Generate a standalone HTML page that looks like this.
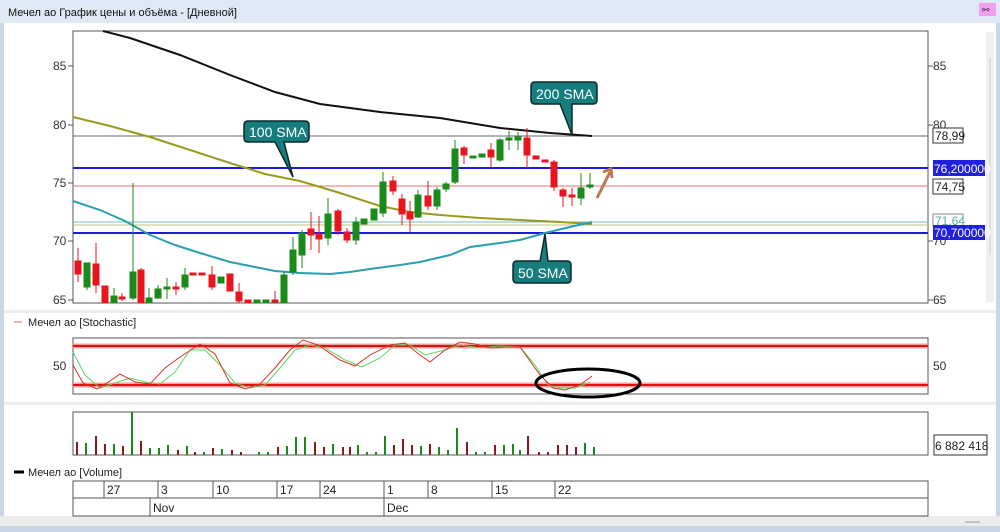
<!DOCTYPE html>
<html><head><meta charset="utf-8"><style>
html,body{margin:0;padding:0;width:1000px;height:532px;overflow:hidden;background:#fff;font-family:"Liberation Sans",sans-serif}
svg{display:block}
text{font-family:"Liberation Sans",sans-serif}
</style></head><body>
<svg width="1000" height="532" viewBox="0 0 1000 532" xmlns="http://www.w3.org/2000/svg">
<rect x="0" y="0" width="1000" height="532" fill="#fff"/>
<rect x="0" y="0" width="1000" height="23" fill="#dfe9f5"/>
<text x="8" y="16" font-size="11" fill="#111">Мечел ао График цены и объёма - [Дневной]</text>
<rect x="979" y="3" width="17" height="13" fill="#f0a0f0"/>
<text x="982" y="13" font-size="9" fill="#333">⚯</text>
<rect x="0" y="23" width="4" height="509" fill="#c9d6e6"/>
<rect x="996" y="23" width="4" height="509" fill="#c9d6e6"/>
<rect x="986" y="32" width="8" height="270" fill="#f0f0f0"/>
<line x1="990" y1="58" x2="990" y2="255" stroke="#ccc"/>
<rect x="0" y="516" width="1000" height="10" fill="#ececec"/>
<rect x="0" y="526" width="1000" height="6" fill="#c9d6e6"/>
<line x1="965" y1="522" x2="980" y2="522" stroke="#999"/>
<rect x="4" y="310" width="992" height="3" fill="#eee"/>
<rect x="4" y="402" width="992" height="3" fill="#eee"/>

<!-- main chart -->
<rect x="73" y="31" width="855" height="272" fill="#fff" stroke="#555" stroke-width="1"/>
<g font-size="12" fill="#333">
<text x="53" y="70">85</text><text x="53" y="129">80</text><text x="53" y="187">75</text><text x="53" y="245">70</text><text x="53" y="304">65</text>
<text x="933" y="70">85</text><text x="933" y="129">80</text><text x="933" y="245">70</text><text x="933" y="304">65</text>
</g>
<g stroke="#555">
<line x1="68" y1="66" x2="73" y2="66"/><line x1="68" y1="125" x2="73" y2="125"/><line x1="68" y1="183" x2="73" y2="183"/><line x1="68" y1="241" x2="73" y2="241"/><line x1="68" y1="300" x2="73" y2="300"/>
<line x1="928" y1="66" x2="933" y2="66"/><line x1="928" y1="125" x2="933" y2="125"/><line x1="928" y1="241" x2="933" y2="241"/><line x1="928" y1="300" x2="933" y2="300"/>
</g>
<line x1="73" y1="136" x2="928" y2="136" stroke="#666" stroke-width="1"/>
<line x1="73" y1="168" x2="928" y2="168" stroke="#1a1ae0" stroke-width="2"/>
<line x1="73" y1="186" x2="928" y2="186" stroke="#e07070" stroke-width="1"/>
<line x1="73" y1="222" x2="928" y2="222" stroke="#70c0c0" stroke-width="1"/>
<line x1="73" y1="225" x2="928" y2="225" stroke="#c0c080" stroke-width="1"/>
<line x1="73" y1="233" x2="928" y2="233" stroke="#1a1ae0" stroke-width="2"/>

<!-- right labels -->
<rect x="933" y="128" width="30" height="15" fill="#fff" stroke="#333"/><text x="935" y="140" font-size="12" fill="#222">78,99</text>
<rect x="933" y="160" width="52" height="16" fill="#2020e0"/><text x="934" y="173" font-size="12" fill="#fff">76,200000</text>
<rect x="933" y="179" width="30" height="15" fill="#fff" stroke="#333"/><text x="935" y="191" font-size="12" fill="#222">74,75</text>
<rect x="933" y="214" width="30" height="12" fill="#fff" stroke="#888"/><text x="935" y="225" font-size="12" fill="#5aa">71,64</text>
<rect x="933" y="225" width="52" height="15" fill="#2020e0"/><text x="934" y="237" font-size="12" fill="#fff">70,700000</text>

<!-- SMAs -->
<polyline fill="none" stroke="#111" stroke-width="2" points="103,31 130,38 180,55 230,75 275,92 320,104 380,112 440,118 500,128 550,133 592,136"/>
<polyline fill="none" stroke="#9a9a20" stroke-width="2" points="73,117 110,126 150,137 190,150 230,163 265,174 300,181 340,193 380,206 410,212 440,215 480,218 520,220 560,222 592,224"/>
<polyline fill="none" stroke="#2a9fae" stroke-width="2" points="73,201 100,210 125,221 150,235 175,245 200,253 230,262 250,266 275,271 300,273 330,274 350,272 370,269 400,265 420,262 450,255 470,247 500,243 520,240 545,233 570,227 592,222"/>

<!-- candles -->
<g stroke-width="1">
<g stroke="#e8141e" fill="#e8141e">
<line x1="78" y1="248" x2="78" y2="282"/><rect x="75" y="261" width="6" height="13"/>
<line x1="96" y1="243" x2="96" y2="293"/><rect x="93" y="264" width="6" height="21"/>
<line x1="105" y1="286" x2="105" y2="303"/><rect x="102" y="286" width="6" height="17"/>
<line x1="122" y1="293" x2="122" y2="301"/><rect x="119" y="297" width="6" height="2"/>
<line x1="141" y1="268" x2="141" y2="303"/><rect x="138" y="270" width="6" height="33"/>
<line x1="176" y1="282" x2="176" y2="295"/><rect x="173" y="287" width="6" height="2"/>
<rect x="190" y="273" width="6" height="2"/><rect x="199" y="273" width="6" height="2"/>
<line x1="212" y1="266" x2="212" y2="290"/><rect x="209" y="275" width="6" height="12"/>
<rect x="227" y="274" width="6" height="17"/>
<line x1="239" y1="283" x2="239" y2="303"/><rect x="236" y="292" width="6" height="9"/>
<rect x="245" y="300" width="6" height="3"/>
<line x1="275" y1="291" x2="275" y2="302"/><rect x="272" y="300" width="6" height="2"/>
<line x1="311" y1="212" x2="311" y2="250"/><rect x="308" y="229" width="6" height="6"/>
<line x1="319" y1="216" x2="319" y2="253"/><rect x="316" y="234" width="6" height="5"/>
<line x1="338" y1="209" x2="338" y2="235"/><rect x="335" y="211" width="6" height="20"/>
<line x1="347" y1="228" x2="347" y2="243"/><rect x="344" y="232" width="6" height="8"/>
<line x1="393" y1="176" x2="393" y2="195"/><rect x="390" y="181" width="6" height="10"/>
<line x1="402" y1="194" x2="402" y2="225"/><rect x="399" y="199" width="6" height="15"/>
<line x1="410" y1="201" x2="410" y2="232"/><rect x="407" y="212" width="6" height="7"/>
<line x1="428" y1="181" x2="428" y2="210"/><rect x="425" y="196" width="6" height="10"/>
<line x1="464" y1="146" x2="464" y2="164"/><rect x="461" y="148" width="6" height="7"/>
<line x1="491" y1="143" x2="491" y2="167"/><rect x="488" y="150" width="6" height="7"/>
<line x1="527" y1="128" x2="527" y2="168"/><rect x="524" y="138" width="6" height="17"/>
<rect x="533" y="156" width="6" height="3"/><rect x="542" y="160" width="6" height="2"/>
<line x1="554" y1="160" x2="554" y2="191"/><rect x="551" y="162" width="6" height="25"/>
<line x1="563" y1="188" x2="563" y2="207"/><rect x="560" y="190" width="6" height="6"/>
<line x1="572" y1="188" x2="572" y2="206"/><rect x="569" y="195" width="6" height="2"/>
</g>
<g stroke="#1a8a1a" fill="#1a8a1a">
<line x1="87" y1="263" x2="87" y2="290"/><rect x="84" y="263" width="6" height="24"/>
<line x1="114" y1="288" x2="114" y2="303"/><rect x="111" y="296" width="6" height="7"/>
<line x1="133" y1="183" x2="133" y2="300"/><rect x="130" y="272" width="6" height="26"/>
<line x1="149" y1="288" x2="149" y2="303"/><rect x="146" y="298" width="6" height="5"/>
<line x1="158" y1="285" x2="158" y2="299"/><rect x="155" y="289" width="6" height="9"/>
<line x1="167" y1="278" x2="167" y2="299"/><rect x="164" y="287" width="6" height="2"/>
<line x1="185" y1="268" x2="185" y2="290"/><rect x="182" y="275" width="6" height="12"/>
<rect x="218" y="277" width="6" height="6"/>
<rect x="254" y="300" width="6" height="3"/><rect x="263" y="300" width="6" height="3"/>
<line x1="284" y1="272" x2="284" y2="303"/><rect x="281" y="275" width="6" height="28"/>
<line x1="293" y1="237" x2="293" y2="275"/><rect x="290" y="250" width="6" height="22"/>
<line x1="302" y1="230" x2="302" y2="268"/><rect x="299" y="233" width="6" height="22"/>
<line x1="328" y1="198" x2="328" y2="245"/><rect x="325" y="214" width="6" height="24"/>
<line x1="356" y1="217" x2="356" y2="245"/><rect x="353" y="222" width="6" height="18"/>
<rect x="361" y="219" width="6" height="5"/><rect x="371" y="209" width="6" height="11"/>
<line x1="383" y1="172" x2="383" y2="217"/><rect x="380" y="182" width="6" height="31"/>
<line x1="418" y1="190" x2="418" y2="218"/><rect x="415" y="195" width="6" height="22"/>
<line x1="437" y1="187" x2="437" y2="210"/><rect x="434" y="190" width="6" height="16"/>
<line x1="446" y1="182" x2="446" y2="192"/><rect x="443" y="184" width="6" height="5"/>
<line x1="455" y1="140" x2="455" y2="184"/><rect x="452" y="149" width="6" height="33"/>
<rect x="470" y="156" width="6" height="2"/><rect x="479" y="154" width="6" height="3"/>
<line x1="500" y1="138" x2="500" y2="162"/><rect x="497" y="140" width="6" height="20"/>
<line x1="509" y1="131" x2="509" y2="150"/><rect x="506" y="138" width="6" height="2"/>
<line x1="518" y1="132" x2="518" y2="150"/><rect x="515" y="137" width="6" height="3"/>
<line x1="581" y1="173" x2="581" y2="205"/><rect x="578" y="188" width="6" height="10"/>
<line x1="590" y1="173" x2="590" y2="189"/><rect x="587" y="185" width="6" height="2"/>
</g>
</g>
<line x1="597" y1="198" x2="610" y2="172" stroke="#b87a50" stroke-width="3"/>
<polyline points="603,172 611,169 612,178" fill="none" stroke="#b87a50" stroke-width="3"/>

<!-- callouts -->
<g fill="#167d7f" stroke="#0c2a2a" stroke-width="1.5">
<path d="M248,121 H305 Q309,121 309,125 V138 Q309,142 305,142 H284 L293,177 L275,142 H248 Q244,142 244,138 V125 Q244,121 248,121 Z"/>
<path d="M535,82 H593 Q597,82 597,86 V100 Q597,104 593,104 H572 L572,135 L560,104 H535 Q531,104 531,100 V86 Q531,82 535,82 Z"/>
<path d="M517,261 H540 L545,234 L548,261 H567 Q571,261 571,265 V279 Q571,283 567,283 H517 Q513,283 513,279 V265 Q513,261 517,261 Z"/>
</g>
<g font-size="14" fill="#fff">
<text x="249" y="137">100 SMA</text>
<text x="536" y="99">200 SMA</text>
<text x="518" y="278">50 SMA</text>
</g>

<!-- stochastic -->
<line x1="14" y1="322" x2="22" y2="322" stroke="#e06060"/>
<text x="28" y="326" font-size="11" fill="#222">Мечел ао [Stochastic]</text>
<rect x="73" y="338" width="855" height="56" fill="#fff" stroke="#555"/>
<line x1="73" y1="346" x2="928" y2="346" stroke="#f0a0a0" stroke-width="5"/>
<line x1="73" y1="346" x2="928" y2="346" stroke="#e01010" stroke-width="2"/>
<line x1="73" y1="385" x2="928" y2="385" stroke="#f0a0a0" stroke-width="5"/>
<line x1="73" y1="385" x2="928" y2="385" stroke="#e01010" stroke-width="2"/>
<text x="53" y="370" font-size="12" fill="#333">50</text>
<text x="933" y="370" font-size="12" fill="#333">50</text>
<polyline fill="none" stroke="#5ad85a" stroke-width="1" points="73,352 85,375 100,388 115,383 130,378 145,382 160,384 175,372 190,350 205,350 220,365 235,383 250,388 265,385 280,368 295,350 310,345 325,348 345,360 362,367 380,358 395,345 410,345 425,355 445,350 460,345 480,348 500,346 520,347 535,365 548,385 560,388 575,388 590,382"/>
<polyline fill="none" stroke="#e03030" stroke-width="1" points="73,365 83,383 97,389 110,381 120,374 135,382 150,384 165,368 180,357 200,344 215,354 230,383 245,389 260,384 275,368 290,350 303,340 318,345 340,360 355,366 370,355 390,345 405,343 420,355 430,362 445,350 460,342 475,344 490,348 505,347 520,347 540,375 553,388 565,390 580,385 592,376"/>
<ellipse cx="588" cy="383" rx="52" ry="14" fill="none" stroke="#000" stroke-width="3"/>

<!-- volume -->
<rect x="73" y="412" width="855" height="43" fill="#fff" stroke="#555"/>
<g stroke-width="2">
<g stroke="#8b1a1a">
<line x1="77" y1="455" x2="77" y2="442"/><line x1="96" y1="455" x2="96" y2="436"/><line x1="105" y1="455" x2="105" y2="444"/><line x1="123" y1="455" x2="123" y2="446"/><line x1="141" y1="455" x2="141" y2="441"/><line x1="178" y1="455" x2="178" y2="450"/><line x1="195" y1="455" x2="195" y2="452"/><line x1="213" y1="455" x2="213" y2="448"/><line x1="232" y1="455" x2="232" y2="450"/><line x1="241" y1="455" x2="241" y2="452"/><line x1="278" y1="455" x2="278" y2="447"/><line x1="315" y1="455" x2="315" y2="442"/><line x1="324" y1="455" x2="324" y2="447"/><line x1="343" y1="455" x2="343" y2="447"/><line x1="350" y1="455" x2="350" y2="447"/><line x1="394" y1="455" x2="394" y2="445"/><line x1="403" y1="455" x2="403" y2="439"/><line x1="412" y1="455" x2="412" y2="445"/><line x1="430" y1="455" x2="430" y2="444"/><line x1="467" y1="455" x2="467" y2="442"/><line x1="495" y1="455" x2="495" y2="445"/><line x1="528" y1="455" x2="528" y2="436"/><line x1="539" y1="455" x2="539" y2="452"/><line x1="548" y1="455" x2="548" y2="452"/><line x1="558" y1="455" x2="558" y2="445"/><line x1="567" y1="455" x2="567" y2="445"/><line x1="576" y1="455" x2="576" y2="447"/>
</g>
<g stroke="#1a8a1a">
<line x1="86" y1="455" x2="86" y2="443"/><line x1="114" y1="455" x2="114" y2="444"/><line x1="132" y1="455" x2="132" y2="412"/><line x1="150" y1="455" x2="150" y2="448"/><line x1="159" y1="455" x2="159" y2="448"/><line x1="168" y1="455" x2="168" y2="445"/><line x1="187" y1="455" x2="187" y2="446"/><line x1="204" y1="455" x2="204" y2="452"/><line x1="222" y1="455" x2="222" y2="449"/><line x1="259" y1="455" x2="259" y2="452"/><line x1="268" y1="455" x2="268" y2="452"/><line x1="287" y1="455" x2="287" y2="446"/><line x1="296" y1="455" x2="296" y2="437"/><line x1="305" y1="455" x2="305" y2="437"/><line x1="333" y1="455" x2="333" y2="444"/><line x1="358" y1="455" x2="358" y2="445"/><line x1="367" y1="455" x2="367" y2="452"/><line x1="376" y1="455" x2="376" y2="452"/><line x1="385" y1="455" x2="385" y2="436"/><line x1="421" y1="455" x2="421" y2="446"/><line x1="439" y1="455" x2="439" y2="447"/><line x1="448" y1="455" x2="448" y2="450"/><line x1="457" y1="455" x2="457" y2="428"/><line x1="476" y1="455" x2="476" y2="452"/><line x1="485" y1="455" x2="485" y2="452"/><line x1="504" y1="455" x2="504" y2="445"/><line x1="513" y1="455" x2="513" y2="444"/><line x1="520" y1="455" x2="520" y2="450"/><line x1="585" y1="455" x2="585" y2="443"/><line x1="594" y1="455" x2="594" y2="447"/>
</g>
</g>
<rect x="934" y="435" width="53" height="20" fill="#fff" stroke="#333"/>
<text x="935" y="450" font-size="12" fill="#222">6 882 418</text>

<line x1="14" y1="472" x2="24" y2="472" stroke="#000" stroke-width="3"/>
<text x="28" y="476" font-size="11" fill="#222">Мечел ао [Volume]</text>

<!-- date axis -->
<rect x="73" y="481" width="855" height="35" fill="#fff" stroke="#555"/>
<line x1="73" y1="498" x2="928" y2="498" stroke="#555"/>
<g stroke="#555">
<line x1="104" y1="481" x2="104" y2="498"/><line x1="158" y1="481" x2="158" y2="498"/><line x1="213" y1="481" x2="213" y2="498"/><line x1="277" y1="481" x2="277" y2="498"/><line x1="320" y1="481" x2="320" y2="498"/><line x1="384" y1="481" x2="384" y2="516"/><line x1="428" y1="481" x2="428" y2="498"/><line x1="492" y1="481" x2="492" y2="498"/><line x1="555" y1="481" x2="555" y2="498"/><line x1="150" y1="498" x2="150" y2="516"/>
</g>
<g font-size="12" fill="#222">
<text x="107" y="494">27</text><text x="161" y="494">3</text><text x="216" y="494">10</text><text x="280" y="494">17</text><text x="323" y="494">24</text><text x="387" y="494">1</text><text x="431" y="494">8</text><text x="495" y="494">15</text><text x="558" y="494">22</text>
<text x="153" y="512">Nov</text><text x="387" y="512">Dec</text>
</g>
</svg>
</body></html>
